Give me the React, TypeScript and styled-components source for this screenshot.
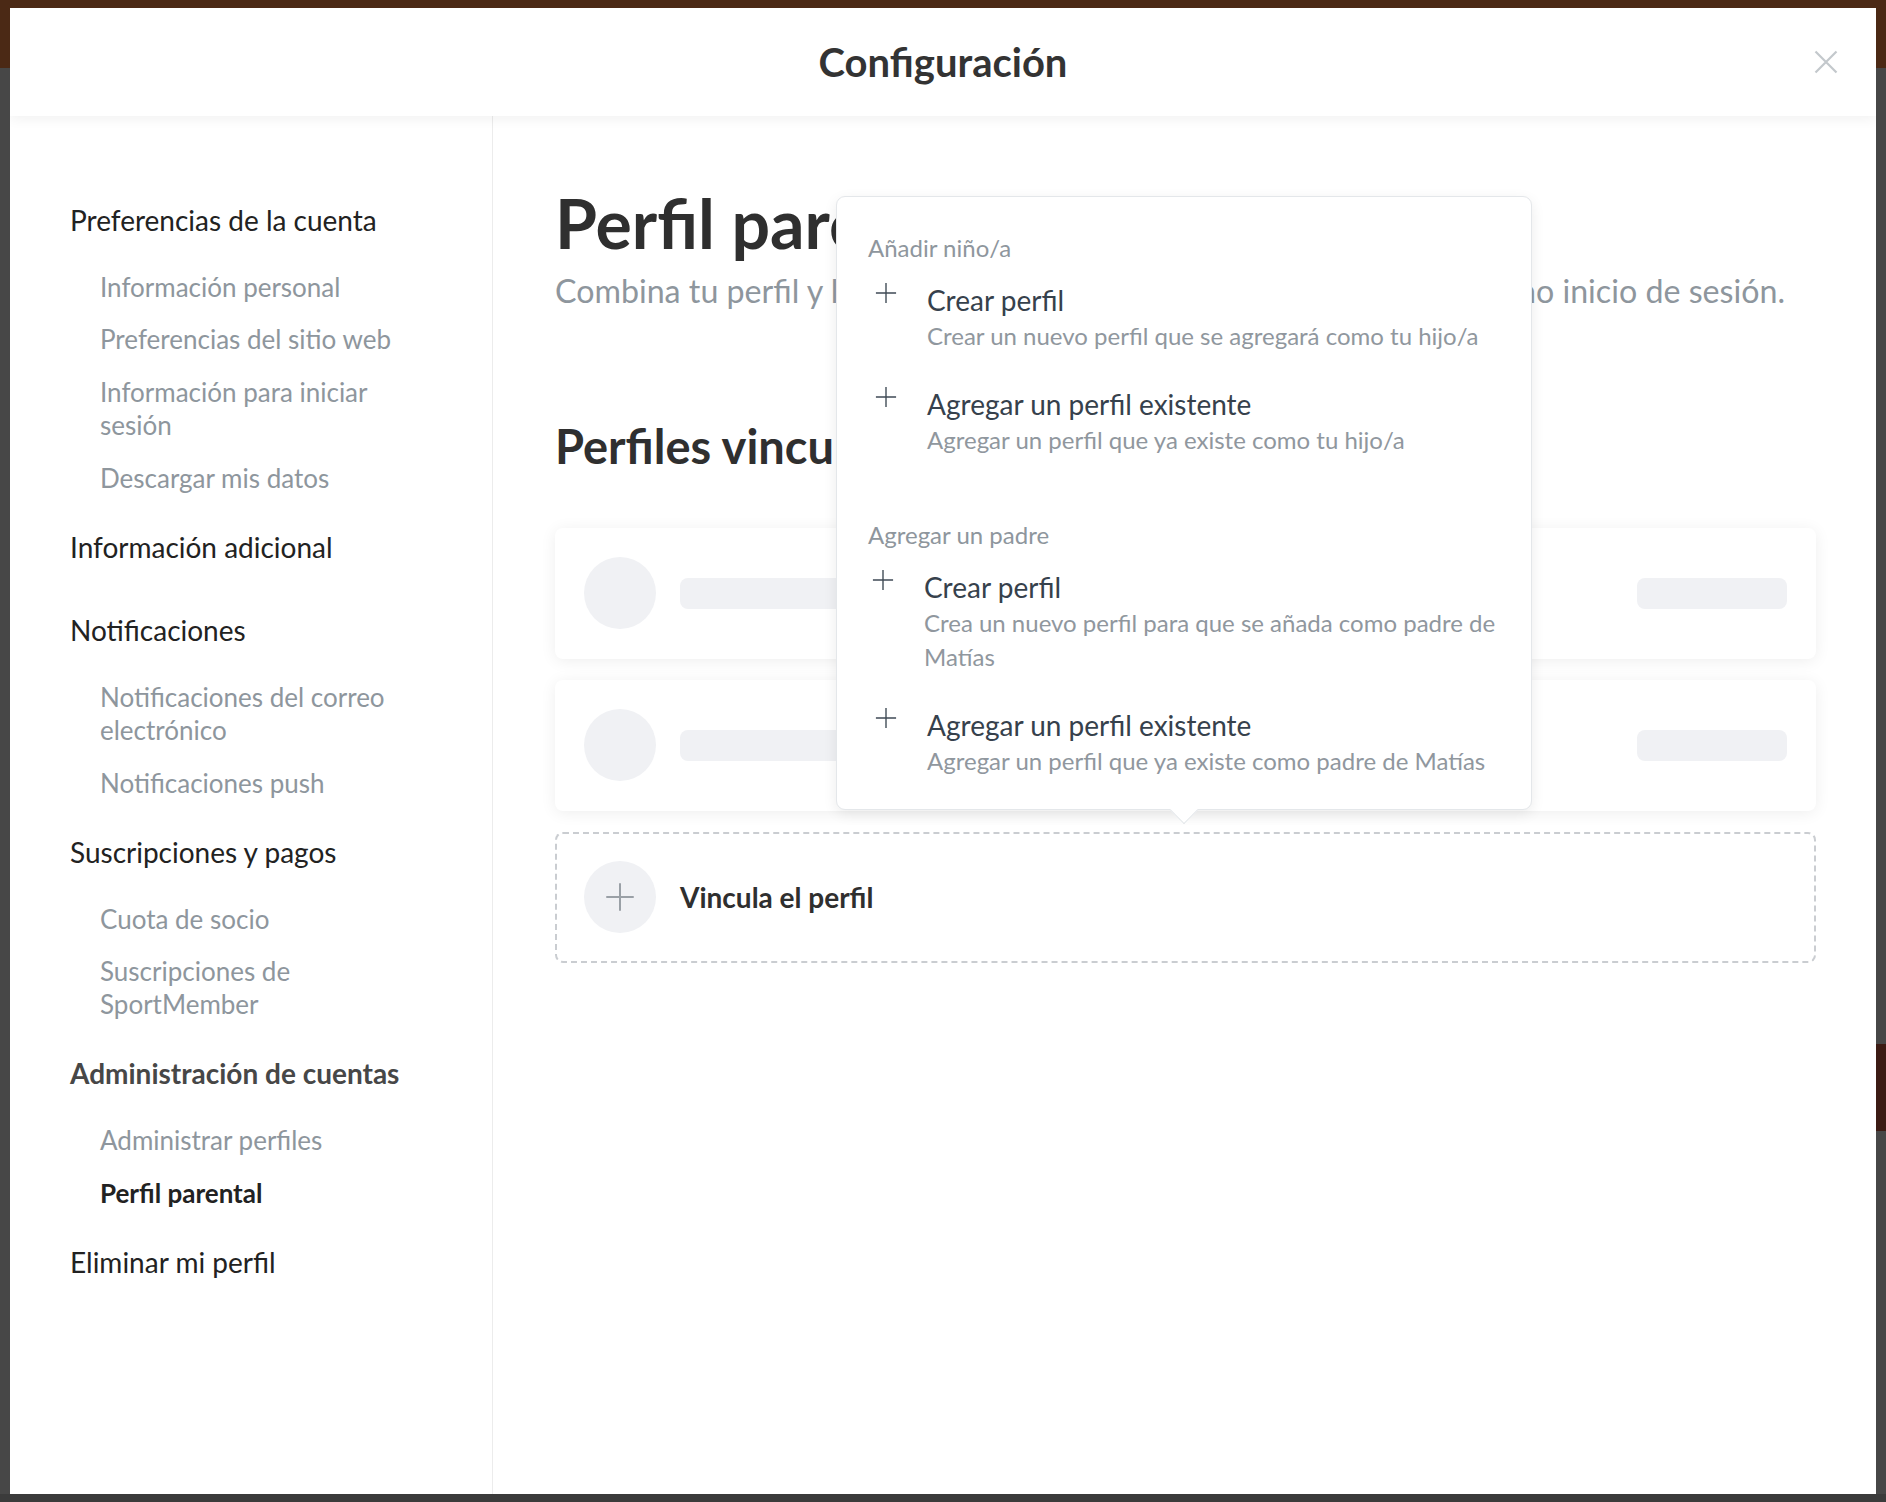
import React from "react";
import styled, { createGlobalStyle } from "styled-components";

const GlobalStyle = createGlobalStyle`
  html, body { margin: 0; padding: 0; }
  body {
    font-family: Lato, "Noto Sans", "Liberation Sans", sans-serif;
    background: #474747;
    -webkit-font-smoothing: antialiased;
  }
  *, *::before, *::after { box-sizing: border-box; }
`;

const Backdrop = styled.div`
  min-height: 1502px;
  padding: 8px 10px;
  background:
    linear-gradient(#3c1b14, #3c1b14) right 0 top 1044px / 10px 87px no-repeat,
    linear-gradient(
      to bottom,
      #4b2915 0,
      #4b2915 68px,
      #474747 68px,
      #474747 1494px,
      #3b3b3b 1494px
    );
`;

const Modal = styled.div`
  height: 1486px;
  background: #fff;
  display: flex;
  flex-direction: column;
  overflow: hidden;
`;

const Header = styled.header`
  flex: none;
  height: 108px;
  display: grid;
  grid-template-columns: 1fr auto 1fr;
  align-items: center;
  padding: 0 38px;
  background: #fff;
  box-shadow: 0 3px 12px rgba(0, 0, 0, 0.06);
  position: relative;
  z-index: 3;
`;

const HeaderTitle = styled.h1`
  grid-column: 2;
  margin: 0;
  font-size: 40px;
  font-weight: 700;
  color: #333;
`;

const CloseButton = styled.button`
  grid-column: 3;
  justify-self: end;
  width: 24px;
  height: 24px;
  padding: 0;
  border: 0;
  background: none;
  cursor: pointer;
  display: flex;
`;

const Body = styled.div`
  flex: 1;
  display: flex;
  min-height: 0;
`;

const Sidebar = styled.nav`
  flex: none;
  width: 483px;
  border-right: 1px solid #ececec;
  padding: 88px 70px 0 60px;
`;

const NavGroup = styled.div`
  padding-bottom: 26.4px;
`;

const NavHeading = styled.div<{ $strong?: boolean }>`
  font-size: 28px;
  line-height: 33px;
  margin-bottom: 24px;
  color: ${(p) => (p.$strong ? "#474747" : "#222")};
  font-weight: ${(p) => (p.$strong ? 700 : 400)};
`;

const NavList = styled.ul`
  list-style: none;
  margin: 0;
  padding: 0 0 0 30px;
`;

const NavItem = styled.li<{ $active?: boolean }>`
  font-size: 26px;
  line-height: 33px;
  padding: 9.8px 0;
  color: ${(p) => (p.$active ? "#222" : "#8e969d")};
  font-weight: ${(p) => (p.$active ? 700 : 400)};
`;

const Main = styled.main`
  flex: 1;
  padding: 66px 60px 0 62px;
`;

const PageTitle = styled.h2`
  margin: 0;
  font-size: 68px;
  line-height: 1.2;
  font-weight: 700;
  color: #2f2f2f;
`;

const Subtitle = styled.p`
  margin: 7px 0 0;
  font-size: 32.2px;
  line-height: 40px;
  color: #8e969d;
  white-space: nowrap;
`;

const SectionTitle = styled.h3`
  margin: 107px 0 54px;
  font-size: 47px;
  line-height: 56px;
  font-weight: 700;
  color: #2f2f2f;
`;

const CardList = styled.div`
  display: flex;
  flex-direction: column;
  gap: 21px;
`;

const ProfileCard = styled.div`
  height: 131px;
  background: #fff;
  border-radius: 8px;
  box-shadow: 0 2px 16px rgba(0, 0, 0, 0.07);
  display: flex;
  align-items: center;
  gap: 24px;
  padding: 0 29px;
`;

const Avatar = styled.div`
  flex: none;
  width: 72px;
  height: 72px;
  border-radius: 50%;
  background: #f0f1f4;
  display: flex;
  align-items: center;
  justify-content: center;
`;

const Skeleton = styled.div<{ $w: number; $right?: boolean }>`
  width: ${(p) => p.$w}px;
  height: 31px;
  border-radius: 8px;
  background: #f0f1f4;
  margin-left: ${(p) => (p.$right ? "auto" : "0")};
`;

const LinkCard = styled.div`
  position: relative;
  height: 131px;
  border: 2px dashed #cacdd1;
  border-radius: 8px;
  display: flex;
  align-items: center;
  gap: 24px;
  padding: 0 27px;
`;

const LinkLabel = styled.span`
  font-size: 28px;
  font-weight: 700;
  color: #2f2f2f;
`;

const Popover = styled.div`
  position: absolute;
  left: 279px;
  bottom: calc(100% + 24px);
  width: 696px;
  background: #fff;
  border: 1px solid #e4e7ea;
  border-radius: 9px;
  box-shadow: 0 4px 14px rgba(0, 0, 0, 0.08);
  padding: 36px 28px 31px 31px;
  z-index: 2;

  &::after {
    content: "";
    position: absolute;
    left: 337px;
    bottom: -11px;
    width: 20px;
    height: 20px;
    background: #fff;
    border-right: 1px solid #e4e7ea;
    border-bottom: 1px solid #e4e7ea;
    transform: rotate(45deg);
  }
`;

const MenuSection = styled.section<{ $spaced?: boolean }>`
  margin-top: ${(p) => (p.$spaced ? "63px" : "0")};
  display: flex;
  flex-direction: column;
  gap: 33px;
`;

const MenuLabel = styled.div`
  font-size: 24px;
  line-height: 30px;
  color: #8e969d;
  margin-bottom: -14px;
`;

const MenuItem = styled.div<{ $nudge?: boolean }>`
  display: grid;
  grid-template-columns: 59px 1fr;
  margin-left: ${(p) => (p.$nudge ? "-3px" : "0")};
  cursor: pointer;
`;

const MenuIcon = styled.div`
  padding-left: 7px;
  display: flex;
`;

const MenuText = styled.div`
  display: flex;
  flex-direction: column;
  gap: 1px;
`;

const MenuTitle = styled.div`
  font-size: 28px;
  line-height: 36px;
  color: #36414c;
`;

const MenuDesc = styled.div`
  font-size: 24px;
  line-height: 34px;
  color: #90979e;
`;

const PlusIcon = ({ size, color, stroke }: { size: number; color: string; stroke: number }) => (
  <svg width={size} height={size} viewBox="0 0 24 24" fill="none">
    <path d="M12 1v22M1 12h22" stroke={color} strokeWidth={stroke} />
  </svg>
);

const CloseIcon = () => (
  <svg width="24" height="24" viewBox="0 0 24 24" fill="none">
    <path d="M1.5 1.5l21 21M22.5 1.5l-21 21" stroke="#c3c8cc" strokeWidth="2.2" />
  </svg>
);

type Nav = { title: string; strong?: boolean; items?: { label: string; active?: boolean }[] };

const NAV: Nav[] = [
  {
    title: "Preferencias de la cuenta",
    items: [
      { label: "Información personal" },
      { label: "Preferencias del sitio web" },
      { label: "Información para iniciar sesión" },
      { label: "Descargar mis datos" },
    ],
  },
  { title: "Información adicional" },
  {
    title: "Notificaciones",
    items: [
      { label: "Notificaciones del correo electrónico" },
      { label: "Notificaciones push" },
    ],
  },
  {
    title: "Suscripciones y pagos",
    items: [{ label: "Cuota de socio" }, { label: "Suscripciones de SportMember" }],
  },
  {
    title: "Administración de cuentas",
    strong: true,
    items: [{ label: "Administrar perfiles" }, { label: "Perfil parental", active: true }],
  },
  { title: "Eliminar mi perfil" },
];

type MenuEntry = { title: string; desc: string; nudge?: boolean };

const MENU: { label: string; items: MenuEntry[] }[] = [
  {
    label: "Añadir niño/a",
    items: [
      { title: "Crear perfil", desc: "Crear un nuevo perfil que se agregará como tu hijo/a" },
      { title: "Agregar un perfil existente", desc: "Agregar un perfil que ya existe como tu hijo/a" },
    ],
  },
  {
    label: "Agregar un padre",
    items: [
      {
        title: "Crear perfil",
        desc: "Crea un nuevo perfil para que se añada como padre de Matías",
        nudge: true,
      },
      {
        title: "Agregar un perfil existente",
        desc: "Agregar un perfil que ya existe como padre de Matías",
      },
    ],
  },
];

export default function App() {
  return (
    <>
      <GlobalStyle />
      <Backdrop>
        <Modal>
          <Header>
            <HeaderTitle>Configuración</HeaderTitle>
            <CloseButton aria-label="Cerrar">
              <CloseIcon />
            </CloseButton>
          </Header>
          <Body>
            <Sidebar>
              {NAV.map((g) => (
                <NavGroup key={g.title}>
                  <NavHeading $strong={g.strong}>{g.title}</NavHeading>
                  {g.items && (
                    <NavList>
                      {g.items.map((it) => (
                        <NavItem key={it.label} $active={it.active}>
                          {it.label}
                        </NavItem>
                      ))}
                    </NavList>
                  )}
                </NavGroup>
              ))}
            </Sidebar>
            <Main>
              <PageTitle>Perfil parental</PageTitle>
              <Subtitle>
                Combina tu perfil y los perfiles de tus hijos/as para compartir un mismo inicio de sesión.
              </Subtitle>
              <SectionTitle>Perfiles vinculados</SectionTitle>
              <CardList>
                <ProfileCard>
                  <Avatar />
                  <Skeleton $w={320} />
                  <Skeleton $w={150} $right />
                </ProfileCard>
                <ProfileCard>
                  <Avatar />
                  <Skeleton $w={320} />
                  <Skeleton $w={150} $right />
                </ProfileCard>
                <LinkCard>
                  <Avatar>
                    <PlusIcon size={30} color="#9aa0a6" stroke={1.6} />
                  </Avatar>
                  <LinkLabel>Vincula el perfil</LinkLabel>
                  <Popover>
                    {MENU.map((sec, i) => (
                      <MenuSection key={sec.label} $spaced={i > 0}>
                        <MenuLabel>{sec.label}</MenuLabel>
                        {sec.items.map((it) => (
                          <MenuItem key={it.title + it.desc} $nudge={it.nudge}>
                            <MenuIcon>
                              <PlusIcon size={22} color="#3f4a55" stroke={1.5} />
                            </MenuIcon>
                            <MenuText>
                              <MenuTitle>{it.title}</MenuTitle>
                              <MenuDesc>{it.desc}</MenuDesc>
                            </MenuText>
                          </MenuItem>
                        ))}
                      </MenuSection>
                    ))}
                  </Popover>
                </LinkCard>
              </CardList>
            </Main>
          </Body>
        </Modal>
      </Backdrop>
    </>
  );
}
